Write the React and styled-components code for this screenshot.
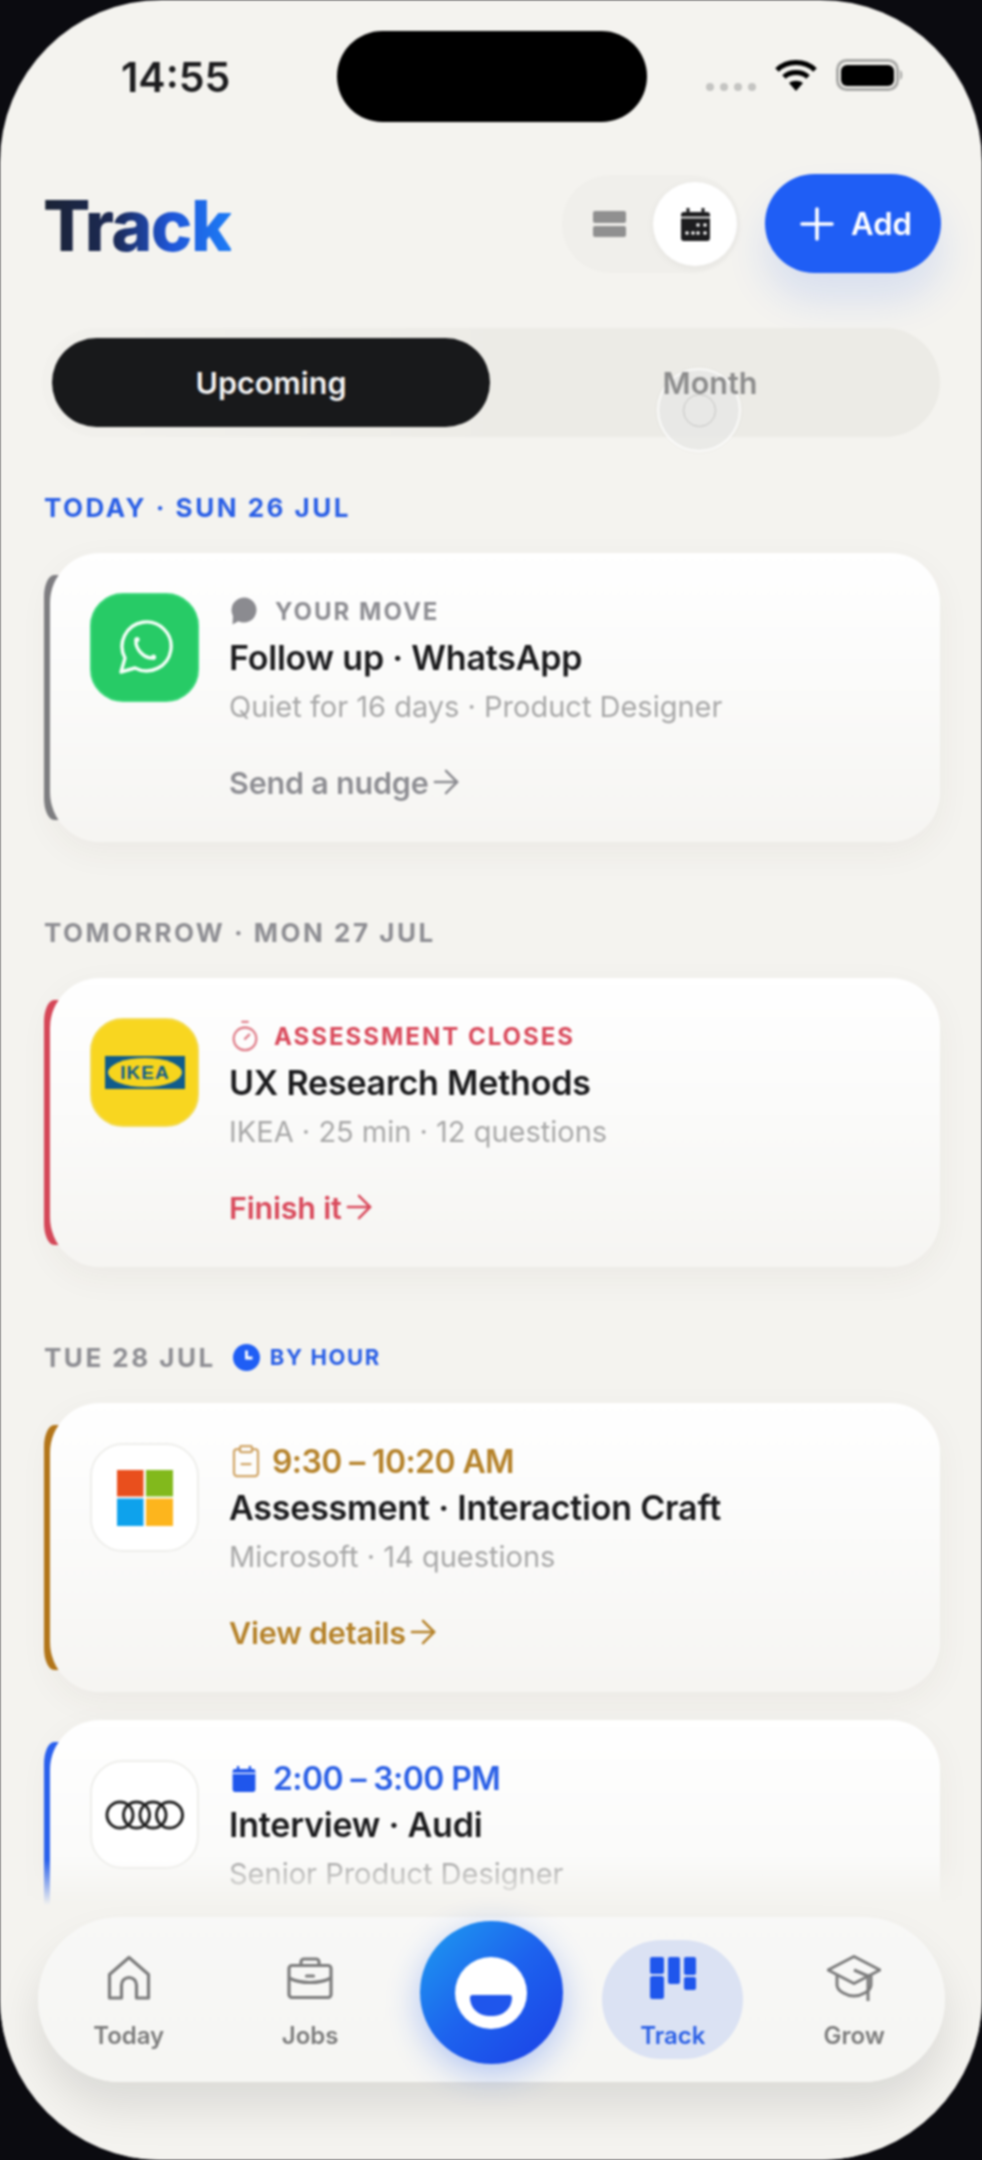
import React from "react";
import styled, { createGlobalStyle } from "styled-components";
import { ArrowRight, ClipboardMinus, Timer } from "lucide-react";

const tones = {
    gray: { text: "#8e8e93", stripe: "#7f7f83" },
    red: { text: "#d94a5c", stripe: "#d8485a" },
    gold: { text: "#b5822a", stripe: "#b5771a" },
    blue: { text: "#2a5fe6", stripe: "#2a62f0" },
};

const GlobalStyle = createGlobalStyle`
    html, body {
        margin: 0;
        background: #0b0b10;
    }
    * {
        box-sizing: border-box;
    }
`;

const Phone = styled.div`
    position: relative;
    width: 982px;
    height: 2160px;
    padding: 31px 42px 0 44px;
    overflow: hidden;
    border-radius: 162px;
    background: #f4f3ef;
    font-family: Inter, "Liberation Sans", sans-serif;
    filter: blur(0.8px);
`;

const StatusBar = styled.div`
    display: flex;
    align-items: center;
    height: 91px;
    margin-right: -6px;
    color: #1c1c1e;
`;

const Clock = styled.div`
    width: 293px;
    padding-left: 77px;
    font-size: 41px;
    font-weight: 600;
    white-space: nowrap;
`;

const Island = styled.div`
    flex: none;
    width: 310px;
    height: 91px;
    border-radius: 46px;
    background: #000;
`;

const StatusIcons = styled.div`
    display: flex;
    align-items: center;
    gap: 18px;
    margin-left: 59px;
    margin-top: -4px;
`;

const SignalDots = styled.div`
    display: flex;
    gap: 6px;
    margin-top: 25px;

    span {
        width: 8px;
        height: 8px;
        border-radius: 50%;
        background: #c4c4c2;
    }
`;

const Header = styled.header`
    display: flex;
    align-items: center;
    justify-content: flex-end;
    height: 99px;
    margin-top: 52px;
`;

const Title = styled.h1`
    margin: 4px auto 0 -1px;
    font-size: 70px;
    font-weight: 800;
    letter-spacing: -1.6px;
    line-height: 1;
    background: linear-gradient(90deg, #1b2335 0%, #1c2a55 38%, #1f56d8 68%, #1d7cf6 100%);
    background-clip: text;
    -webkit-background-clip: text;
    color: transparent;
`;

const ViewToggle = styled.div`
    display: flex;
    align-items: center;
    width: 178px;
    height: 98px;
    padding-right: 3px;
    border-radius: 49px;
    background: #f0efeb;
`;

const ToggleSlot = styled.div`
    display: flex;
    align-items: center;
    justify-content: center;
    flex: none;
    height: 84px;
    width: ${(p) => (p.$active ? "84px" : "91px")};
    padding-left: ${(p) => (p.$active ? "0" : "4px")};
    border-radius: 42px;
    background: ${(p) => (p.$active ? "#fff" : "transparent")};
    box-shadow: ${(p) => (p.$active ? "0 2px 8px rgba(0,0,0,.05)" : "none")};
`;

const AddButton = styled.button`
    display: flex;
    align-items: center;
    justify-content: center;
    gap: 17px;
    width: 176px;
    height: 99px;
    margin-left: 25px;
    margin-right: -1px;
    padding: 0 0 0 6px;
    border: 0;
    border-radius: 50px;
    background: #1f5ef5;
    color: #fff;
    font-family: inherit;
    font-size: 31px;
    font-weight: 600;
    box-shadow: 0 26px 40px rgba(31, 94, 245, 0.13);
`;

const Segment = styled.div`
    position: relative;
    display: flex;
    height: 109px;
    margin: 55px 0 0 -2px;
    padding: 10px;
    border-radius: 55px;
    background: linear-gradient(90deg, #f2f1ed 0%, #ecebe6 55%);
`;

const SegmentTab = styled.div`
    position: relative;
    display: flex;
    align-items: center;
    justify-content: center;
    border-radius: 45px;
    font-size: 30.5px;
    font-weight: 600;
    flex: ${(p) => (p.$active ? "0 0 438px" : "1")};
    background: ${(p) => (p.$active ? "#18191b" : "transparent")};
    color: ${(p) => (p.$active ? "#f2f2f2" : "#8c8c8c")};
`;

const TouchMark = styled.div`
    position: absolute;
    left: 615px;
    top: 40px;
    display: flex;
    align-items: center;
    justify-content: center;
    width: 84px;
    height: 84px;
    border-radius: 50%;
    background: rgba(232, 232, 229, 0.85);
    border: 2px solid rgba(255, 255, 255, 0.8);
    box-shadow: 0 0 3px rgba(0, 0, 0, 0.06);

    &::after {
        content: "";
        width: 31px;
        height: 31px;
        border-radius: 50%;
        border: 1.5px solid rgba(170, 170, 168, 0.6);
    }
`;

const DayLabel = styled.div`
    display: flex;
    align-items: center;
    height: 30px;
    margin-top: ${(p) => (p.$first ? "55px" : "75px")};
    margin-bottom: 31px;
    font-size: 26px;
    font-weight: 700;
    letter-spacing: 2.5px;
    white-space: nowrap;
    color: ${(p) => tones[p.$tone].text};
`;

const HourBadge = styled.span`
    display: flex;
    align-items: center;
    gap: 10px;
    margin-left: 17px;
    font-size: 22px;
    letter-spacing: 1.6px;
    color: ${tones.blue.text};
`;

const Card = styled.article`
    position: relative;
    display: flex;
    gap: 30px;
    min-height: 289px;
    margin-left: 6px;
    padding: 40px 40px 42px;
    border-radius: 50px;
    background: linear-gradient(180deg, #ffffff 0%, #fbfbfa 45%, #f6f5f2 100%);
    box-shadow: 0 10px 34px rgba(70, 60, 40, 0.05);

    &::before {
        content: "";
        position: absolute;
        z-index: -1;
        left: -6px;
        top: 22px;
        bottom: 22px;
        width: 20px;
        border-radius: 10px 0 0 10px / 22px 0 0 22px;
        background: ${(p) => tones[p.$tone].stripe};
    }

    & + & {
        margin-top: 28px;
    }
`;

const LogoTile = styled.div`
    display: flex;
    align-items: center;
    justify-content: center;
    flex: none;
    width: 109px;
    height: 109px;
    border-radius: 33px;
    background: ${(p) => p.$bg || "#fff"};
    border: 2px solid ${(p) => p.$line || "#eeeeeb"};
`;

const CardBody = styled.div`
    min-width: 0;
`;

const Eyebrow = styled.div`
    display: flex;
    align-items: center;
    height: 36px;
    font-size: 24px;
    font-weight: 700;
    letter-spacing: 2px;
    white-space: nowrap;
    color: ${(p) => tones[p.$tone].text};
`;

const EyebrowIcon = styled.span`
    display: flex;
    flex: none;
    align-items: center;
    width: ${(p) => (p.$time ? "44px" : "46px")};
    margin-left: ${(p) => (p.$pull ? "-1px" : "0")};
    padding-left: ${(p) => (p.$pull ? "0" : "2px")};
`;

const TimeText = styled.span`
    font-size: 32px;
    font-weight: 600;
    letter-spacing: -0.6px;
`;

const CardTitle = styled.h2`
    margin: 9px 0 0;
    font-size: 34px;
    font-weight: 600;
    line-height: 40px;
    letter-spacing: -0.2px;
    white-space: nowrap;
    color: #1b1b1d;
`;

const CardMeta = styled.p`
    margin: 11px 0 0;
    font-size: 29px;
    font-weight: 400;
    line-height: 36px;
    white-space: nowrap;
    color: #a8a8a8;
`;

const CardLink = styled.a`
    display: flex;
    align-items: center;
    height: 36px;
    margin-top: 39px;
    font-size: 30.5px;
    font-weight: 600;
    letter-spacing: -0.2px;
    color: ${(p) => tones[p.$tone].text};

    svg {
        margin-left: -2px;
    }
`;

const BottomFade = styled.div`
    position: absolute;
    left: 0;
    right: 0;
    bottom: 0;
    height: 300px;
    background: linear-gradient(180deg, rgba(244, 243, 239, 0) 0, #f4f3ef 45px);
`;

const TabBar = styled.nav`
    position: absolute;
    left: 38px;
    top: 1917px;
    display: grid;
    grid-template-columns: repeat(5, 1fr);
    align-items: center;
    width: 907px;
    height: 165px;
    border-radius: 83px;
    background: linear-gradient(180deg, #f8f8f7 0%, #f6f6f3 100%);
    box-shadow: 0 26px 44px rgba(0, 0, 0, 0.1);
`;

const TabItem = styled.a`
    display: flex;
    flex-direction: column;
    align-items: center;
    justify-content: flex-start;
    justify-self: center;
    width: 141px;
    height: 119px;
    padding-top: 14px;
    border-radius: 60px;
    font-size: 24px;
    font-weight: 600;
    background: ${(p) => (p.$active ? "#dbe2f3" : "transparent")};
    color: ${(p) => (p.$active ? tones.blue.text : "#7c7c7c")};
`;

const TabIcon = styled.div`
    display: flex;
    align-items: center;
    justify-content: center;
    height: 48px;
    margin-bottom: 19px;
`;

const AssistantButton = styled.button`
    display: flex;
    align-items: center;
    justify-content: center;
    justify-self: center;
    width: 143px;
    height: 143px;
    margin-bottom: 14px;
    padding: 0;
    border: 0;
    border-radius: 50%;
    background: linear-gradient(135deg, #1e9df0 0%, #1d62ee 50%, #1b3fe6 100%);
    box-shadow: 0 10px 34px rgba(31, 94, 245, 0.32);
`;

const AssistantFace = styled.div`
    display: flex;
    justify-content: center;
    width: 72px;
    height: 72px;
    padding-top: 38px;
    border-radius: 50%;
    background: #fff;

    &::after {
        content: "";
        width: 42px;
        height: 21px;
        border-radius: 3px 3px 21px 21px;
        background: #1f56ec;
    }
`;

const WifiIcon = () => (
    <svg width="44" height="34" viewBox="0 0 44 34" fill="none" stroke="#000" strokeWidth="5">
        <path d="M3 12 C13 2 31 2 41 12" />
        <path d="M10 19 C16 13 28 13 34 19" />
        <path d="M22 33 L15 25 C19 22 25 22 29 25 Z" fill="#000" stroke="none" />
    </svg>
);

const BatteryIcon = () => (
    <svg width="68" height="32" viewBox="0 0 68 32">
        <rect x="1.5" y="1.5" width="60" height="29" rx="9" fill="none" stroke="#a9a9a7" strokeWidth="3" />
        <rect x="5" y="6" width="53" height="21" rx="6" fill="#000" />
        <path d="M64 11 C67 12 67 20 64 21 Z" fill="#a9a9a7" />
    </svg>
);

const ListIcon = () => (
    <svg width="33" height="26" viewBox="0 0 33 26" fill="#909090">
        <rect width="33" height="12" rx="2" />
        <rect y="15" width="33" height="11" rx="2" />
    </svg>
);

const CalendarFilled = ({ size = 33, color = "#1d1d1f", dots = true }) => (
    <svg width={size} height={size + 1} viewBox="0 0 33 34">
        <path d="M2 8a3 3 0 0 1 3-3h23a3 3 0 0 1 3 3v23a3 3 0 0 1-3 3H5a3 3 0 0 1-3-3z" fill={color} />
        <path d="M9 1v7M24 1v7" stroke={color} strokeWidth="3" />
        <path d="M2 10.5h29" stroke="#fff" strokeWidth="1.6" />
        {dots && (
            <g fill="#fff">
                <circle cx="19" cy="18" r="1.8" />
                <circle cx="26" cy="18" r="1.8" />
                <circle cx="8" cy="26" r="1.8" />
                <circle cx="14" cy="26" r="1.8" />
                <circle cx="19" cy="26" r="1.8" />
                <circle cx="26" cy="26" r="1.8" />
            </g>
        )}
    </svg>
);

const PlusIcon = () => (
    <svg width="34" height="34" viewBox="0 0 34 34" stroke="#fff" strokeWidth="3.6" strokeLinecap="round">
        <path d="M17 2v30M2 17h30" />
    </svg>
);

const BubbleIcon = () => (
    <svg width="26" height="28" viewBox="0 0 26 28" fill="#8b8b90">
        <path d="M13 0.5a12.5 12.5 0 1 1-5.6 23.7L1.5 27.5 2 19A12.5 12.5 0 0 1 13 0.5z" />
    </svg>
);

const ClockBadge = () => (
    <svg width="27" height="27" viewBox="0 0 27 27">
        <circle cx="13.5" cy="13.5" r="13.5" fill="#1f5ef5" />
        <path d="M13.5 6.5v7.5h6" fill="none" stroke="#fff" strokeWidth="2.8" />
    </svg>
);

const WhatsappMark = () => (
    <svg width="58" height="58" viewBox="0 0 58 58" fill="none" stroke="#f4fff8">
        <path d="M5 53l4-14A24.5 24.5 0 1 1 19 49z" strokeWidth="3.4" strokeLinejoin="round" />
        <path d="M20 21c-1 9 8 19 18 18" strokeWidth="3.4" strokeLinecap="round" />
        <circle cx="21" cy="20.5" r="2.6" fill="#f4fff8" stroke="none" />
        <circle cx="37.5" cy="38" r="2.6" fill="#f4fff8" stroke="none" />
    </svg>
);

const IkeaMark = () => (
    <svg width="80" height="33" viewBox="0 0 80 33">
        <rect width="80" height="33" fill="#0f5c8c" />
        <ellipse cx="40" cy="16.5" rx="37" ry="14.5" fill="#f7d51d" />
        <text x="40" y="23" textAnchor="middle" fontFamily="Liberation Sans, sans-serif" fontSize="19" fontWeight="700" fill="#0f5c8c" letterSpacing="1">IKEA</text>
    </svg>
);

const MicrosoftMark = () => (
    <svg width="56" height="56" viewBox="0 0 56 56">
        <rect width="26.5" height="26.5" fill="#e94f1d" />
        <rect x="29" width="27" height="26.5" fill="#82b91c" />
        <rect y="28.5" width="26.5" height="27.5" fill="#0ea2ec" />
        <rect x="29" y="28.5" width="27" height="27.5" fill="#fdb51d" />
    </svg>
);

const AudiMark = () => (
    <svg width="80" height="30" viewBox="0 0 80 30" fill="none" stroke="#222" strokeWidth="3">
        <circle cx="15" cy="15" r="13" />
        <circle cx="31.5" cy="15" r="13" />
        <circle cx="48" cy="15" r="13" />
        <circle cx="64.5" cy="15" r="13" />
    </svg>
);

const HouseIcon = () => (
    <svg width="44" height="46" viewBox="0 0 44 46" fill="none" stroke="#7c7c7c" strokeWidth="3.2" strokeLinejoin="round">
        <path d="M2.5 43V19.5L22 2.5l19.5 17V43H29.5V30a7.5 7.5 0 0 0-15 0v13z" />
    </svg>
);

const BriefcaseIcon = () => (
    <svg width="46" height="42" viewBox="0 0 46 42" fill="none" stroke="#7c7c7c" strokeWidth="3.2" strokeLinejoin="round">
        <rect x="2" y="8.5" width="42" height="32" rx="3" />
        <path d="M14 8V5a3 3 0 0 1 3-3h12a3 3 0 0 1 3 3v3" />
        <path d="M2 21c12 6 30 6 42 0" />
        <path d="M19.5 19h7" strokeLinecap="round" />
    </svg>
);

const BoardIcon = () => (
    <svg width="46" height="42" viewBox="0 0 46 42" fill="#1f56ec">
        <rect width="14" height="17" rx="2" />
        <rect y="19" width="14" height="23" rx="2.5" />
        <rect x="18" width="12" height="27" rx="2" />
        <rect x="34" width="12" height="18" rx="2" />
        <rect x="34" y="20" width="12" height="13" rx="2" />
    </svg>
);

const CapIcon = () => (
    <svg width="54" height="46" viewBox="0 0 54 46" fill="none" stroke="#7c7c7c" strokeWidth="3" strokeLinejoin="round">
        <path d="M27 1.5L53 15 27 28.5 1 15z" />
        <path d="M10 20.500V30c0 6 10 11 17 11s17-5 17-11v-9.500" />
        <path d="M27 15l14 6v25" />
    </svg>
);

const agenda = [
    {
        key: "today",
        label: "TODAY · SUN 26 JUL",
        labelTone: "blue",
        first: true,
        cards: [
            {
                tone: "gray",
                logo: <LogoTile $bg="#27cb66" $line="#3bd87a"><WhatsappMark /></LogoTile>,
                icon: <BubbleIcon />,
                eyebrow: "YOUR MOVE",
                title: "Follow up · WhatsApp",
                meta: "Quiet for 16 days · Product Designer",
                link: "Send a nudge",
            },
        ],
    },
    {
        key: "tomorrow",
        label: "TOMORROW · MON 27 JUL",
        labelTone: "gray",
        cards: [
            {
                tone: "red",
                logo: <LogoTile $bg="#f8d620" $line="#f3db55"><IkeaMark /></LogoTile>,
                icon: <Timer size={34} strokeWidth={1.6} color="#e0808c" />,
                pull: true,
                eyebrow: "ASSESSMENT CLOSES",
                title: "UX Research Methods",
                meta: "IKEA · 25 min · 12 questions",
                link: "Finish it",
            },
        ],
    },
    {
        key: "tuesday",
        label: "TUE 28 JUL",
        labelTone: "gray",
        byHour: true,
        cards: [
            {
                tone: "gold",
                logo: <LogoTile><MicrosoftMark /></LogoTile>,
                icon: <ClipboardMinus size={36} strokeWidth={1.5} color="#d0a566" />,
                pull: true,
                time: "9:30 – 10:20 AM",
                title: "Assessment · Interaction Craft",
                meta: "Microsoft · 14 questions",
                link: "View details",
            },
            {
                tone: "blue",
                logo: <LogoTile><AudiMark /></LogoTile>,
                icon: <CalendarFilled size={26} color="#1f56ec" dots={false} />,
                time: "2:00 – 3:00 PM",
                title: "Interview · Audi",
                meta: "Senior Product Designer",
            },
        ],
    },
];

const AgendaCard = ({ card }) => (
    <Card $tone={card.tone}>
        {card.logo}
        <CardBody>
            <Eyebrow $tone={card.tone}>
                <EyebrowIcon $time={!!card.time} $pull={card.pull}>{card.icon}</EyebrowIcon>
                {card.time ? <TimeText>{card.time}</TimeText> : card.eyebrow}
            </Eyebrow>
            <CardTitle>{card.title}</CardTitle>
            <CardMeta>{card.meta}</CardMeta>
            {card.link && (
                <CardLink $tone={card.tone}>
                    {card.link}
                    <ArrowRight size={38} strokeWidth={1.6} />
                </CardLink>
            )}
        </CardBody>
    </Card>
);

export default function App() {
    return (
        <>
            <GlobalStyle />
            <Phone>
                <StatusBar>
                    <Clock>14:55</Clock>
                    <Island />
                    <StatusIcons>
                        <SignalDots><span /><span /><span /><span /></SignalDots>
                        <WifiIcon />
                        <BatteryIcon />
                    </StatusIcons>
                </StatusBar>

                <Header>
                    <Title>Track</Title>
                    <ViewToggle>
                        <ToggleSlot><ListIcon /></ToggleSlot>
                        <ToggleSlot $active><CalendarFilled /></ToggleSlot>
                    </ViewToggle>
                    <AddButton><PlusIcon />Add</AddButton>
                </Header>

                <Segment>
                    <TouchMark />
                    <SegmentTab $active>Upcoming</SegmentTab>
                    <SegmentTab>Month</SegmentTab>
                </Segment>

                {agenda.map((day) => (
                    <section key={day.key}>
                        <DayLabel $tone={day.labelTone} $first={day.first}>
                            {day.label}
                            {day.byHour && <HourBadge><ClockBadge />BY HOUR</HourBadge>}
                        </DayLabel>
                        {day.cards.map((card) => (
                            <AgendaCard key={card.title} card={card} />
                        ))}
                    </section>
                ))}

                <BottomFade />
                <TabBar>
                    <TabItem><TabIcon><HouseIcon /></TabIcon>Today</TabItem>
                    <TabItem><TabIcon><BriefcaseIcon /></TabIcon>Jobs</TabItem>
                    <AssistantButton><AssistantFace /></AssistantButton>
                    <TabItem $active><TabIcon><BoardIcon /></TabIcon>Track</TabItem>
                    <TabItem><TabIcon><CapIcon /></TabIcon>Grow</TabItem>
                </TabBar>
            </Phone>
        </>
    );
}
